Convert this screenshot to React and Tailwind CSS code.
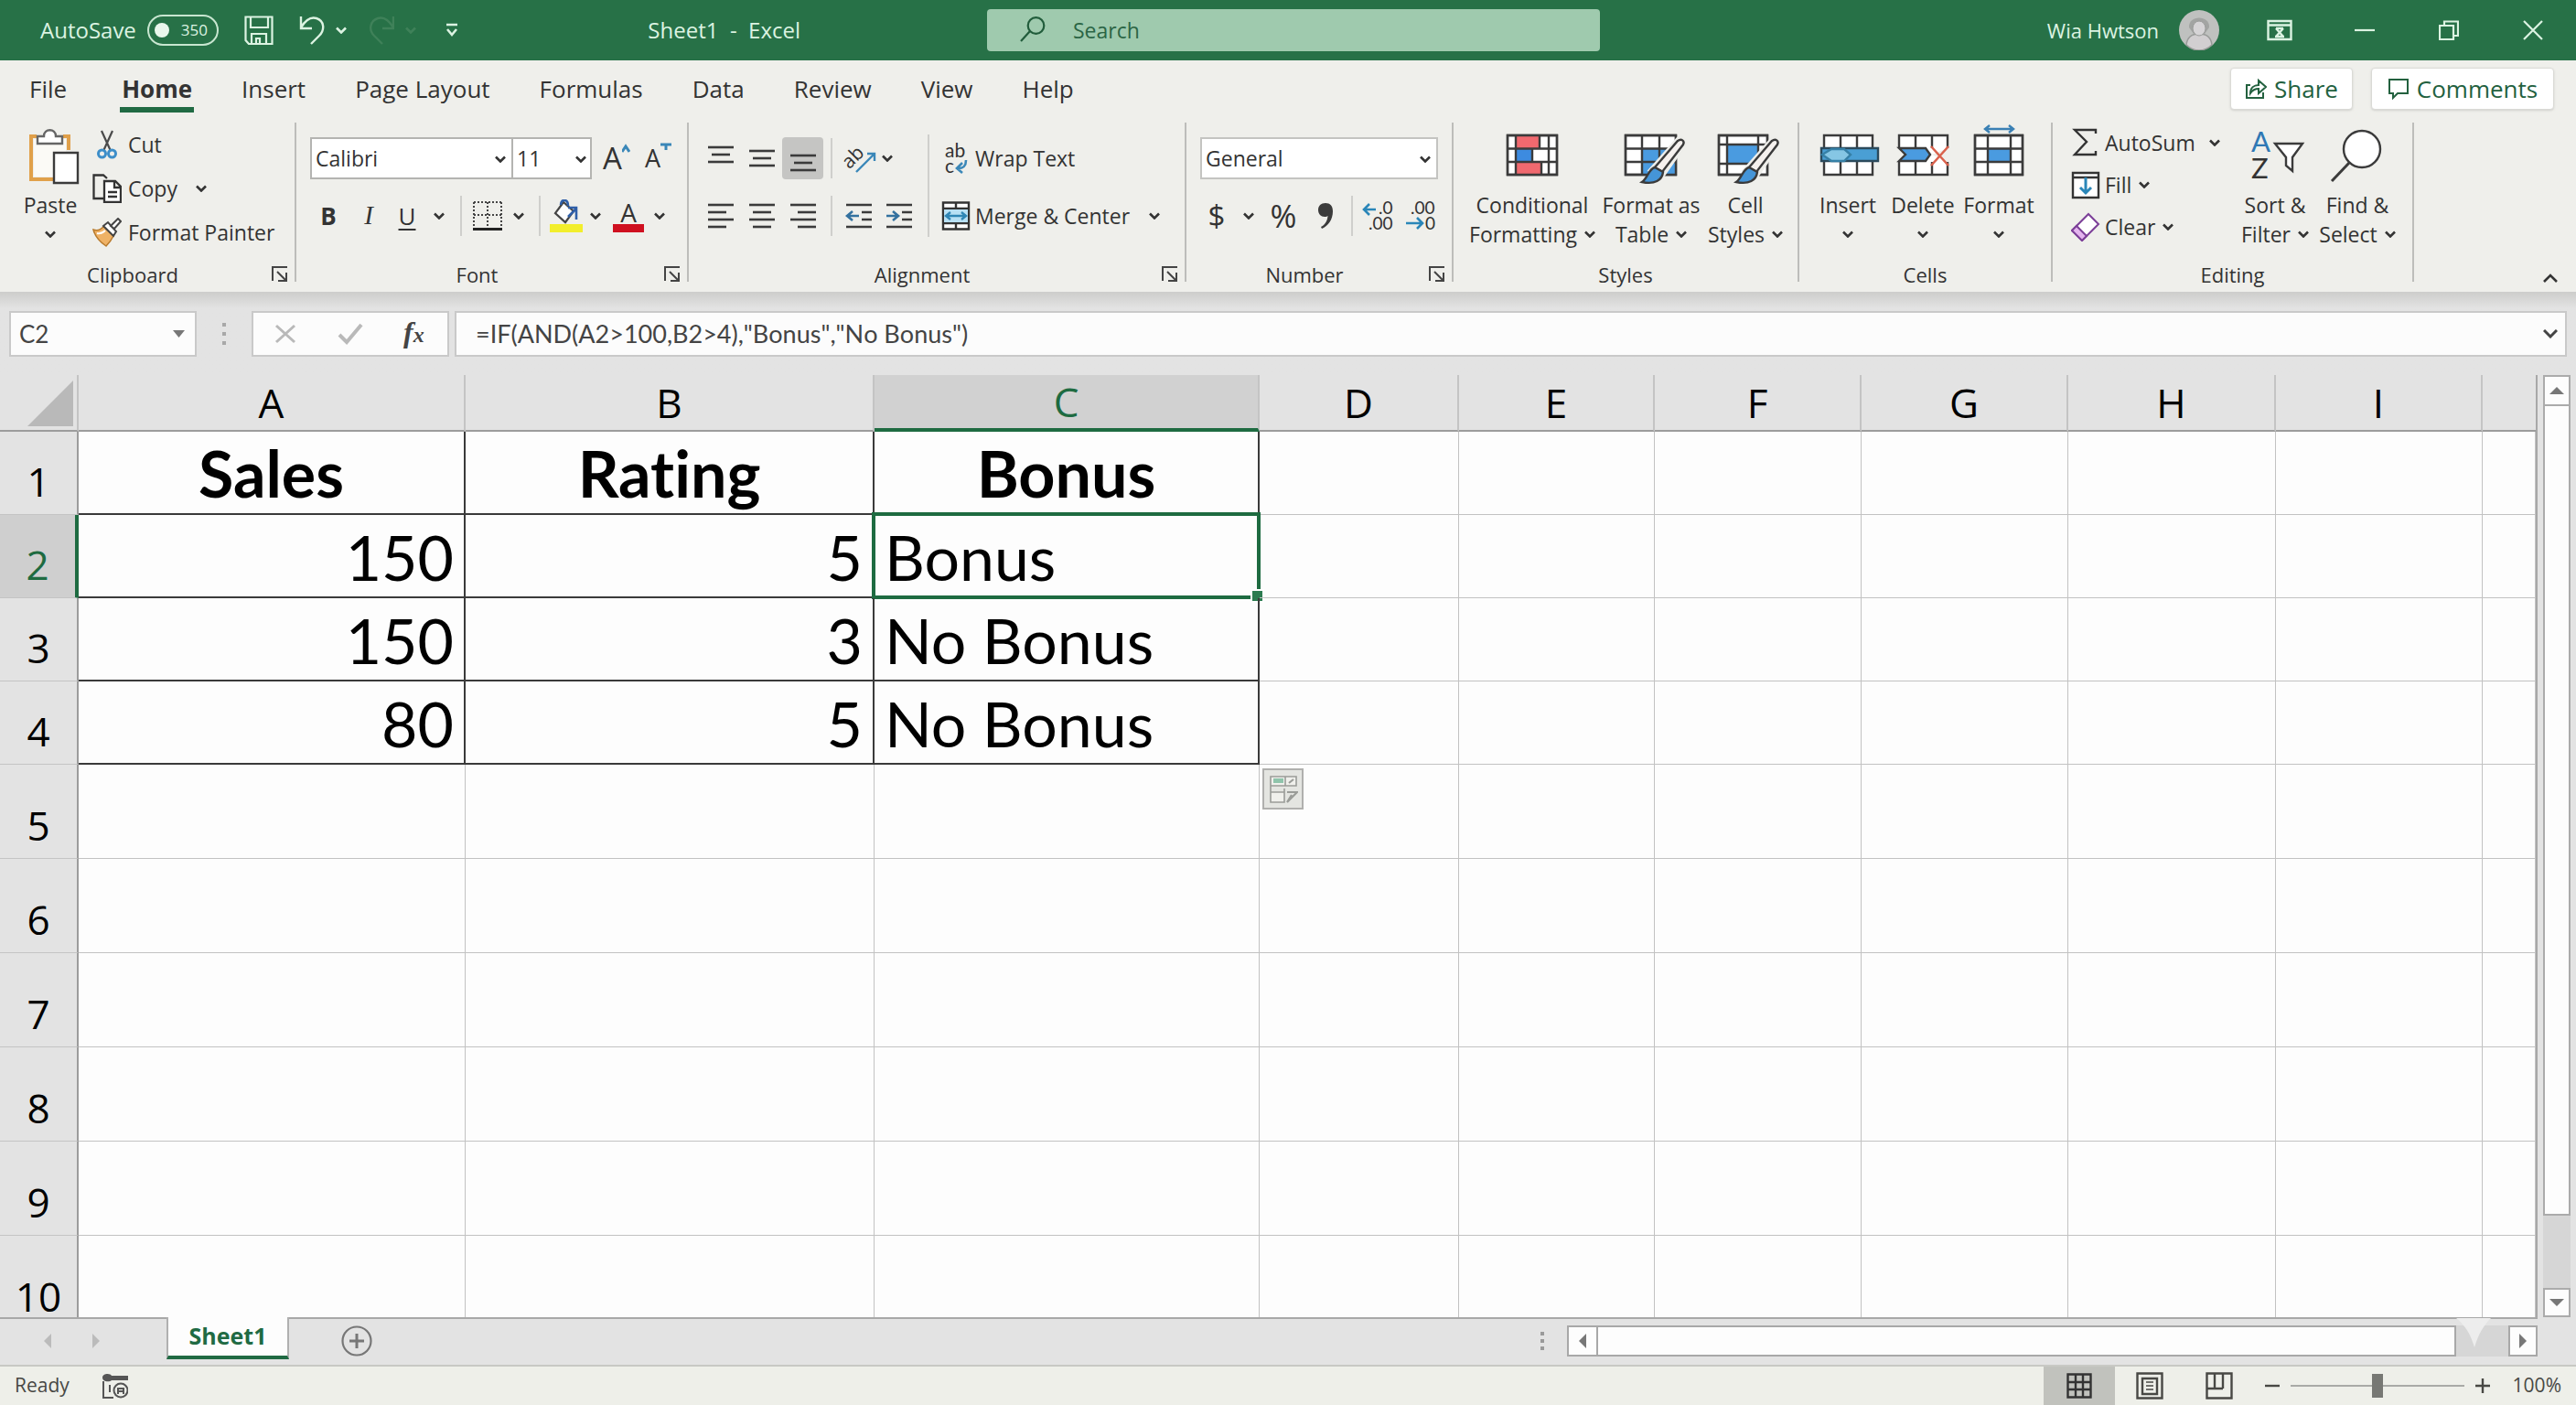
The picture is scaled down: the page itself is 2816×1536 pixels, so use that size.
import React from 'react'

const rowNumbers = [1, 2, 3, 4, 5, 6, 7, 8, 9, 10]

const columns = [
  { name: 'A', width: 'w-[423px]' },
  { name: 'B', width: 'w-[447px]' },
  { name: 'C', width: 'w-[421px]' },
  { name: 'D', width: 'w-[218px]' },
  { name: 'E', width: 'w-[214px]' },
  { name: 'F', width: 'w-[226px]' },
  { name: 'G', width: 'w-[226px]' },
  { name: 'H', width: 'w-[227px]' },
  { name: 'I', width: 'w-[226px]' },
  { name: '', width: '' },
]

const cells = {
  A1: 'Sales', B1: 'Rating', C1: 'Bonus',
  A2: '150', B2: '5', C2: 'Bonus',
  A3: '150', B3: '3', C3: 'No Bonus',
  A4: '80', B4: '5', C4: 'No Bonus',
}

const tabs = ['File', 'Home', 'Insert', 'Page Layout', 'Formulas', 'Data', 'Review', 'View', 'Help']

function Chevron({ className = '' }) {
  return (
    <svg className={`w-3 h-2 shrink-0 ${className}`} viewBox="0 0 12 8" fill="none" stroke="currentColor" strokeWidth="2.6">
      <path d="M1 1.5L6 6.5L11 1.5" />
    </svg>
  )
}

function ChevronButton({ label, className }) {
  return (
    <button aria-label={label} className={`flex items-center justify-center ${className}`}>
      <Chevron />
    </button>
  )
}

function Group({ label, launcher, className, children }) {
  return (
    <section className={`flex shrink-0 ${className}`}>
      <div className="flex-1 min-w-0 flex flex-col">
        <div className="h-[154px]">{children}</div>
        <div className="flex items-center h-6">
          <span className="flex-1 text-center text-[22px] leading-6">{label}</span>
          {launcher && (
            <button aria-label={`${label} settings`} className="w-8 flex justify-center">
              <svg className="w-[18px] h-[18px]" viewBox="0 0 18 18" fill="none" stroke="#444" strokeWidth="2">
                <path d="M1 16V1H17M6 6L15 15M16 7V16H7" />
              </svg>
            </button>
          )}
        </div>
      </div>
      <div className="w-[2px] h-[174px] bg-[#bdbdba]" />
    </section>
  )
}

function Separator({ className = '' }) {
  return <div className={`w-[2px] h-11 bg-[#cfcfcc] shrink-0 ${className}`} />
}

function BigButton({ icon, lines, className }) {
  return (
    <button className={`flex flex-col items-center pt-1 whitespace-nowrap ${className}`}>
      <svg className="w-16 h-[70px] overflow-visible" viewBox="0 0 64 70" fill="none" stroke="#3b3b3b" strokeWidth="2.4">
        {icon}
      </svg>
      <span className="h-8 leading-8">{lines[0]}</span>
      <span className="h-8 leading-8 flex items-center justify-center gap-2">
        {lines[1]}
        <Chevron />
      </span>
    </button>
  )
}

function Lines({ rows, className = '' }) {
  return (
    <svg className={`w-[30px] h-[30px] ${className}`} viewBox="0 0 30 30" stroke="#3b3b3b" strokeWidth="2.6">
      {rows.map(([x1, x2, y]) => (
        <line key={y} x1={x1} x2={x2} y1={y} y2={y} />
      ))}
    </svg>
  )
}

function TitleBar() {
  return (
    <header className="grid grid-cols-[1fr_670px_1067px] items-center h-[66px] bg-[#277147] text-[#dcf3e2] text-[24px]">
      <div className="flex items-center pl-11">
        <label htmlFor="autosave">AutoSave</label>
        <span className="relative ml-3 w-[78px] h-[34px]">
          <input id="autosave" type="checkbox" className="appearance-none block w-[78px] h-[34px] rounded-full border-2 border-[#c8e6d0]" />
          <span className="absolute left-2 top-[9px] w-4 h-4 rounded-full bg-[#e9f7ec] pointer-events-none" />
          <span className="absolute right-3 top-0 text-[17px] leading-[34px] pointer-events-none">350</span>
        </span>
        <button aria-label="Save" className="ml-7">
          <svg className="w-8 h-8" viewBox="0 0 32 32" fill="none" stroke="currentColor" strokeWidth="2.2">
            <path d="M2 1.5H30.500V31H5L1.500 27V1.500ZM7 2V13H26V2M8 31V20H24V31M13 31V25H17V31" />
          </svg>
        </button>
        <button aria-label="Undo" className="ml-7">
          <svg className="w-7 h-8" viewBox="0 0 28 32" fill="none" stroke="currentColor" strokeWidth="2.4">
            <path d="M2 1V14H14M2 13C7 5 13 1 19 3C28 6 28 16 22 22L13 31" />
          </svg>
        </button>
        <ChevronButton label="Undo history" className="ml-3" />
        <button aria-label="Redo" className="ml-6 text-[#3f8159]">
          <svg className="w-7 h-8" viewBox="0 0 28 32" fill="none" stroke="currentColor" strokeWidth="2.4">
            <path d="M27 1V14H15M27 13C22 5 16 1 10 3C1 6 0 16 6 22L15 31" />
          </svg>
        </button>
        <ChevronButton label="Redo history" className="ml-3 text-[#3f8159]" />
        <button aria-label="Customize toolbar" className="ml-8">
          <svg className="w-[14px] h-4" viewBox="0 0 14 16" fill="none" stroke="currentColor" strokeWidth="2.6">
            <path d="M1 2H13M2 7L7 13L12 7" />
          </svg>
        </button>
        <h1 className="ml-auto mr-[204px] whitespace-pre">Sheet1  -  Excel</h1>
      </div>
      <div className="relative">
        <svg className="absolute left-9 top-2 w-7 h-7" viewBox="0 0 28 28" fill="none" stroke="#215c3b" strokeWidth="2.2">
          <circle cx="17.500" cy="10" r="8.800" />
          <path d="M11 16L1 27" />
        </svg>
        <input
          aria-label="Search"
          placeholder="Search"
          className="w-full h-[46px] pl-[94px] rounded-sm bg-[#9fcaae] text-[23px] placeholder:text-[#2b6545] placeholder:opacity-100"
        />
      </div>
      <div className="flex items-center justify-end pr-9">
        <span className="text-[22px]">Wia Hwtson</span>
        <svg className="w-11 h-11 ml-[22px]" viewBox="0 0 44 44">
          <circle cx="22" cy="22" r="22" fill="#bfc1bf" />
          <path d="M8 38C9 29 15 26 22 26C29 26 35 29 36 38C28 46 16 46 8 38Z" fill="#d2cfd1" stroke="#999b99" strokeWidth="1.500" />
          <path d="M11 19C10 5 34 5 33 19L28 26H16Z" fill="#a2a4a2" />
          <ellipse cx="22" cy="20" rx="7" ry="8" fill="#d6d4d6" stroke="#999b99" />
        </svg>
        <button aria-label="Ribbon display options" className="ml-[52px]">
          <svg className="w-7 h-6" viewBox="0 0 28 24" fill="none" stroke="currentColor" strokeWidth="2.400">
            <path d="M1.500 2H26.500V22H1.500ZM1.500 6.500H26.500M10 10L18 19M18 10L10 19M9 19H19M10 10H18" />
          </svg>
        </button>
        <button aria-label="Minimize" className="ml-[68px]">
          <svg className="w-[22px] h-[22px]" viewBox="0 0 22 22" stroke="currentColor" strokeWidth="2.200">
            <path d="M0 11H22" />
          </svg>
        </button>
        <button aria-label="Restore" className="ml-[70px]">
          <svg className="w-[22px] h-[22px]" viewBox="0 0 22 22" fill="none" stroke="currentColor" strokeWidth="2.200">
            <path d="M1 6H16V21H1ZM6 6V1.500H21V17H16" />
          </svg>
        </button>
        <button aria-label="Close" className="ml-[70px]">
          <svg className="w-[22px] h-[22px]" viewBox="0 0 22 22" stroke="currentColor" strokeWidth="2.200">
            <path d="M1 1L21 21M21 1L1 21" />
          </svg>
        </button>
      </div>
    </header>
  )
}

function TabBar() {
  return (
    <div className="flex items-start h-[68px] pt-3 pl-8 pr-6 text-[26px]">
      <nav className="flex gap-[54px]">
        {tabs.map((tab) => (
          <a
            key={tab}
            href="#"
            className={
              tab === 'Home'
                ? 'relative font-bold ml-[6px] after:absolute after:-inset-x-[2px] after:-bottom-[6px] after:h-[6px] after:bg-[#206a43]'
                : ''
            }
          >
            {tab}
          </a>
        ))}
      </nav>
      <div className="ml-auto flex gap-5 -mt-1 text-[#23613f]">
        <button className="flex items-center justify-center gap-2 w-[134px] h-[46px] bg-white border border-[#dadad6] rounded-sm shadow-sm font-medium">
          <svg className="w-6 h-6" viewBox="0 0 24 24" fill="none" stroke="currentColor" strokeWidth="2">
            <path d="M6 8H2V22H20V16M6 17C6 11 10 8 15 8V3L23 10L15 17V12C11 12 8 14 6 17Z" />
          </svg>
          Share
        </button>
        <button className="flex items-center justify-center gap-2 w-[200px] h-[46px] bg-white border border-[#dadad6] rounded-sm shadow-sm font-medium">
          <svg className="w-6 h-6" viewBox="0 0 24 24" fill="none" stroke="currentColor" strokeWidth="2">
            <path d="M2 2H22V17H11L6 22V17H2Z" />
          </svg>
          Comments
        </button>
      </div>
    </div>
  )
}

function ClipboardGroup() {
  return (
    <Group label="Clipboard" launcher className="w-[324px]">
      <div className="flex pl-5">
        <BigButton
          className="w-[70px]"
          lines={['Paste', '']}
          icon={
            <>
              <path d="M17 11H11V58H36M46 11H52V26" stroke="#e0a04a" strokeWidth="4" />
              <path d="M14 14H49V55H14Z" fill="#fbfaf6" stroke="none" />
              <path d="M18 19V11H25C25 2 38 2 38 11H45V19Z" fill="#fff" stroke="#666" />
              <path d="M36 29H62V62H36Z" fill="#fff" />
            </>
          }
        />
        <div className="pl-[11px]">
          <button className="flex items-center h-12">
            <svg className="w-8 h-8 mr-[7px]" viewBox="0 0 32 32" fill="none">
              <path d="M10 1L20 23M22 1L12 23" stroke="#4a4a4a" strokeWidth="2.200" />
              <circle cx="10.500" cy="26" r="4" stroke="#3d8ec9" strokeWidth="3" />
              <circle cx="21.500" cy="26" r="4" stroke="#3d8ec9" strokeWidth="3" />
            </svg>
            Cut
          </button>
          <div className="flex items-center h-12">
            <button className="flex items-center">
              <svg className="w-8 h-8 mr-[7px]" viewBox="0 0 32 32" fill="none" stroke="#333" strokeWidth="2.300">
                <path d="M12 27H1.500V1.500H12L16 5" />
                <path d="M13 8H25L31 14V31H13ZM24 8V15H31M17 20H27M17 25H27" fill="#fff" />
              </svg>
              Copy
            </button>
            <ChevronButton label="Copy options" className="w-9 ml-2" />
          </div>
          <button className="flex items-center h-12 whitespace-nowrap">
            <svg className="w-8 h-8 mr-[7px]" viewBox="0 0 32 32" fill="none">
              <path d="M1 13C7 15 10 12 13 9L23 20C21 24 18 28 15 31C9 27 3 21 1 13Z" fill="#efb266" stroke="#b87a2c" strokeWidth="1.500" />
              <path d="M5 17C9 18 12 16 14 14" stroke="#fff" strokeWidth="2" />
              <path d="M12 9L17 5L26 15L23 20Z" fill="#fff" stroke="#444" strokeWidth="2" />
              <path d="M20 9L28 1L31 4L24 12Z" fill="#fff" stroke="#444" strokeWidth="2" />
            </svg>
            Format Painter
          </button>
        </div>
      </div>
    </Group>
  )
}

function FontGroup() {
  return (
    <Group label="Font" launcher className="w-[429px]">
      <div className="flex items-center pt-4 pl-[15px]">
        <div className="relative w-[222px]">
          <select aria-label="Font name" className="appearance-none w-full h-[46px] pl-1 bg-white border-2 border-[#b4b4b1]">
            <option>Calibri</option>
          </select>
          <Chevron className="absolute right-2 top-5 pointer-events-none" />
        </div>
        <div className="relative w-[88px] -ml-[2px]">
          <select aria-label="Font size" className="appearance-none w-full h-[46px] pl-1 bg-white border-2 border-[#b4b4b1]">
            <option>11</option>
          </select>
          <Chevron className="absolute right-[6px] top-5 pointer-events-none" />
        </div>
        <button aria-label="Increase font size" className="ml-3 flex">
          <span className="text-[33px] leading-10">A</span>
          <svg className="w-[9px] h-3 mt-1" viewBox="0 0 9 12" fill="none" stroke="#3a87b8" strokeWidth="3">
            <path d="M0 9L4 3L8 9" />
          </svg>
        </button>
        <button aria-label="Decrease font size" className="ml-4 flex">
          <span className="text-[27px] leading-10">A</span>
          <svg className="w-3 h-3 mt-[2px]" viewBox="0 0 12 12" fill="none" stroke="#3a87b8" strokeWidth="3">
            <path d="M0 3H12M6 3V9" />
          </svg>
        </button>
      </div>
      <div className="flex items-center h-11 mt-[18px] pl-[13px]">
        <button className="w-11 text-[26px] font-bold">B</button>
        <button className="w-11 font-['Liberation_Serif'] italic text-[29px]">I</button>
        <button className="w-10 text-[26px] underline underline-offset-4">U</button>
        <ChevronButton label="Underline options" className="w-[30px]" />
        <Separator className="ml-2" />
        <button aria-label="Borders" className="ml-3">
          <svg className="w-8 h-8" viewBox="0 0 32 32" fill="none" stroke="#444" strokeWidth="2">
            <path d="M1 1H31M1 1V29M31 1V29M16 1V29M1 15H31" strokeDasharray="2 2" />
            <path d="M0 30.500H32" stroke="#222" strokeWidth="3" />
          </svg>
        </button>
        <ChevronButton label="Border options" className="w-9" />
        <Separator className="ml-1" />
        <button aria-label="Fill color" className="ml-[10px]">
          <svg className="w-9 h-9" viewBox="0 0 36 36" fill="none">
            <path d="M15 3L26 13L17 25L6 15Z" fill="#fff" stroke="#444" strokeWidth="2.200" />
            <path d="M12 6C12 -1 20 -1 20 7M20 9H29V22M29 10L20 19" stroke="#2f5fa8" strokeWidth="2.600" />
            <path d="M0 27H36V36H0Z" fill="#f2ee2c" />
          </svg>
        </button>
        <ChevronButton label="Fill color options" className="w-7" />
        <button aria-label="Font color" className="flex flex-col items-center w-9 ml-1">
          <span className="text-[28px] leading-[26px]">A</span>
          <span className="w-[34px] h-[9px] bg-[#cf1020]" />
        </button>
        <ChevronButton label="Font color options" className="w-8" />
      </div>
    </Group>
  )
}

function AlignmentGroup() {
  return (
    <Group label="Alignment" launcher className="w-[544px]">
      <div className="flex">
        <div className="pl-3">
          <div className="flex items-center h-[46px] mt-4">
            <button aria-label="Top align" className="w-[45px] flex justify-center">
              <Lines rows={[[1, 29, 3], [5, 25, 11], [1, 29, 19]]} />
            </button>
            <button aria-label="Middle align" className="w-[45px] flex justify-center">
              <Lines rows={[[1, 29, 7], [5, 25, 15], [1, 29, 23]]} />
            </button>
            <button aria-label="Bottom align" className="w-[45px] h-[46px] flex items-center justify-center bg-[#c5c5c3] rounded-sm">
              <Lines rows={[[1, 29, 12], [5, 25, 20], [1, 29, 28]]} />
            </button>
            <Separator className="ml-2" />
            <button aria-label="Orientation" className="ml-[14px]">
              <svg className="w-9 h-8 overflow-visible" viewBox="0 0 36 32" fill="none">
                <text x="-4" y="22" transform="rotate(-45 8 15)" fontSize="21" fill="#333" className="font-['Open_Sans']">ab</text>
                <path d="M12 31L32 11M24 11H32V19" stroke="#3a87b8" strokeWidth="2.400" />
              </svg>
            </button>
            <ChevronButton label="Orientation options" className="w-5" />
          </div>
          <div className="flex items-center h-11 mt-[18px]">
            <button aria-label="Align left" className="w-[45px] flex justify-center">
              <Lines rows={[[1, 29, 3], [1, 21, 11], [1, 29, 19], [1, 21, 27]]} />
            </button>
            <button aria-label="Center" className="w-[45px] flex justify-center">
              <Lines rows={[[1, 29, 3], [5, 25, 11], [1, 29, 19], [5, 25, 27]]} />
            </button>
            <button aria-label="Align right" className="w-[45px] flex justify-center">
              <Lines rows={[[1, 29, 3], [9, 29, 11], [1, 29, 19], [9, 29, 27]]} />
            </button>
            <Separator className="ml-2" />
            <button aria-label="Decrease indent" className="ml-[14px]">
              <svg className="w-[30px] h-[30px]" viewBox="0 0 30 30" fill="none" stroke="#3b3b3b" strokeWidth="2.600">
                <path d="M1 3H29M18 11H29M18 19H29M1 27H29" />
                <path d="M2 15H15M8 10L2 15L8 20" stroke="#33719f" />
              </svg>
            </button>
            <button aria-label="Increase indent" className="ml-[14px]">
              <svg className="w-[30px] h-[30px]" viewBox="0 0 30 30" fill="none" stroke="#3b3b3b" strokeWidth="2.600">
                <path d="M1 3H29M18 11H29M18 19H29M1 27H29" />
                <path d="M1 15H14M8 10L14 15L8 20" stroke="#33719f" />
              </svg>
            </button>
          </div>
        </div>
        <div className="w-[2px] h-[112px] mt-[13px] ml-4 bg-[#cfcfcc]" />
        <div className="pl-[13px]">
          <button className="flex items-center h-[46px] mt-4 whitespace-nowrap">
            <svg className="w-8 h-9 mr-[5px] overflow-visible" viewBox="0 0 32 36" fill="none">
              <text x="4" y="17" fontSize="21" fill="#333" className="font-['Lato']">ab</text>
              <text x="4" y="34" fontSize="21" fill="#333" className="font-['Lato']">c</text>
              <path d="M27 20C27 27 24 29 18 29M23 23L17 29L23 34" stroke="#3a87b8" strokeWidth="2.600" />
            </svg>
            Wrap Text
          </button>
          <div className="flex items-center h-11 mt-[18px]">
            <button className="flex items-center whitespace-nowrap">
              <svg className="w-8 h-8 mr-[5px]" viewBox="0 0 32 32" fill="none" stroke="#333" strokeWidth="2.400">
                <path d="M2 1.500H30V30.500H2ZM2 8H30M2 24H30M16 1.500V8M16 24V30.500" fill="#fff" />
                <path d="M3 9H29V23H3Z" fill="#b8e0f4" stroke="none" />
                <path d="M5 16H27M10 12L5 16L10 20M22 12L27 16L22 20" stroke="#2f86b5" />
              </svg>
              Merge &amp; Center
            </button>
            <ChevronButton label="Merge options" className="w-[54px]" />
          </div>
        </div>
      </div>
    </Group>
  )
}

function NumberGroup() {
  return (
    <Group label="Number" launcher className="w-[292px]">
      <div className="relative w-[260px] mt-4 ml-[15px]">
        <select aria-label="Number format" className="appearance-none w-full h-[46px] pl-1 bg-white border-2 border-[#c4c4c1]">
          <option>General</option>
        </select>
        <Chevron className="absolute right-2 top-5 pointer-events-none" />
      </div>
      <div className="flex items-center h-11 mt-[18px] pl-[18px]">
        <button className="w-[30px] text-[33px]">$</button>
        <ChevronButton label="Currency options" className="w-10" />
        <button className="w-9 text-[35px]">%</button>
        <button aria-label="Comma style" className="ml-3 w-8 flex justify-center">
          <svg className="w-4 h-7" viewBox="0 0 16 28" fill="#3b3b3b">
            <path d="M8 0C3 0 0 3 0 7.500C0 12 3 15 7 15C9 15 10 14.500 10.500 14C10 20 7 24 3 26L4 28C11 25 16 18 16 9C16 3 13 0 8 0Z" />
          </svg>
        </button>
        <Separator className="ml-3" />
        <button aria-label="Increase decimal" className="ml-3">
          <svg className="w-[34px] h-8 overflow-visible" viewBox="0 0 34 32" fill="#333">
            <text x="16" y="14" fontSize="19" className="font-['Lato']">.0</text>
            <text x="5" y="31" fontSize="19" className="font-['Lato']">.00</text>
            <path d="M0 9H13M6 3L0 9L6 15" fill="none" stroke="#2a86b8" strokeWidth="2.600" />
          </svg>
        </button>
        <button aria-label="Decrease decimal" className="ml-3">
          <svg className="w-[34px] h-8 overflow-visible" viewBox="0 0 34 32" fill="#333">
            <text x="5" y="14" fontSize="19" className="font-['Lato']">.00</text>
            <text x="21" y="31" fontSize="19" className="font-['Lato']">0</text>
            <path d="M0 24H18M12 18L18 24L12 30" fill="none" stroke="#2a86b8" strokeWidth="2.600" />
          </svg>
        </button>
      </div>
    </Group>
  )
}

function Brush() {
  return (
    <>
      <path d="M62 15C66 13 69 16 67 20L43 54L33 48Z" fill="#f5f1ee" stroke="#eeeeea" strokeWidth="7" />
      <path d="M61 16C65 13 69 16 67 20L44 50L36 45Z" fill="#f5f1ee" />
      <path d="M36 45L45 50C44 59 36 64 22 61C28 57 29 47 36 45Z" fill="#4595d8" />
    </>
  )
}

function StylesGroup() {
  return (
    <Group label="Styles" className="w-[378px]">
      <div className="flex pl-[22px]">
        <BigButton
          className="w-32"
          lines={['Conditional', 'Formatting']}
          icon={
            <>
              <path d="M5 10H59V53H5Z" fill="#fff" />
              <path d="M15 10H39V24H15ZM15 39H41V53H15Z" fill="#f0696f" stroke="none" />
              <path d="M15 24H32V39H15Z" fill="#3d8be0" stroke="none" />
              <path d="M5 24.500H59M5 39H59M14 10V53M50 10V53M40 10V24M32 24V39M42 39V53" />
              <path d="M5 10H59V53H5Z" />
            </>
          }
        />
        <BigButton
          className="w-[132px]"
          lines={['Format as', 'Table']}
          icon={
            <>
              <path d="M4 10H59V53H4Z" fill="#fff" />
              <path d="M23 24H59V53H23Z" fill="#4a9be0" stroke="none" />
              <path d="M4 24.500H59M4 39H59M22 10V53M41 10V53" />
              <path d="M4 10H59V53H4Z" />
              <Brush />
            </>
          }
        />
        <BigButton
          className="w-[74px]"
          lines={['Cell', 'Styles']}
          icon={
            <>
              <path d="M3 10H56V53H3Z" fill="#fff" />
              <path d="M12 20H46V41H12Z" fill="#4a9be0" stroke="none" />
              <path d="M3 20H56M3 41H56M12 10V53M46 10V53" />
              <path d="M3 10H56V53H3Z" />
              <Brush />
            </>
          }
        />
      </div>
    </Group>
  )
}

function CellsGroup() {
  return (
    <Group label="Cells" className="w-[277px]">
      <div className="flex pl-[12px]">
        <BigButton
          className="w-[82px]"
          lines={['Insert', '']}
          icon={
            <>
              <path d="M6 10H59V53H6ZM24 10V53M42 10V53" fill="#fff" />
              <path d="M3 24H65V38H3Z" fill="#4a9fd4" stroke="#2b4a5c" />
              <path d="M4 31L14 25H28L35 31L28 38H14Z" fill="#86c6e4" stroke="#3680a6" />
            </>
          }
        />
        <BigButton
          className="w-[82px]"
          lines={['Delete', '']}
          icon={
            <>
              <path d="M6 10H59V24L42 31L59 39V53H6V39L13 31L6 24Z" fill="#fff" stroke="none" />
              <path d="M59 24V10H6V24M6 39V53H59V39M24 10V53M42 10V24M42 39V53" />
              <path d="M6 24H35L40 31L35 38H6L13 31Z" fill="#4a9be0" />
              <path d="M41 22L60 43M60 22L41 43" stroke="#d9614c" strokeWidth="2.600" />
            </>
          }
        />
        <BigButton
          className="w-[84px]"
          lines={['Format', '']}
          icon={
            <>
              <path d="M6 10H58V53H6Z" fill="#fff" />
              <path d="M20 24H45V39H20Z" fill="#4a9be0" stroke="none" />
              <path d="M6 24.500H58M6 39H58M20 10V53M45 10V53" />
              <path d="M6 10H58V53H6Z" />
              <path d="M17 3H48M22 -1L17 3L22 7M43 -1L48 3L43 7" stroke="#3a80b4" />
            </>
          }
        />
      </div>
    </Group>
  )
}

function EditingGroup() {
  return (
    <Group label="Editing" className="w-[395px]">
      <div className="flex pl-5">
        <div className="w-[178px]">
          <div className="flex items-center h-11">
            <button className="flex items-center">
              <svg className="w-8 h-8 mr-[5px]" viewBox="0 0 32 32" fill="none" stroke="#333" strokeWidth="2.400">
                <path d="M27 6V2H4L17 15L4 29H27V25" />
              </svg>
              AutoSum
            </button>
            <ChevronButton label="AutoSum options" className="w-[54px]" />
          </div>
          <button className="flex items-center h-12">
            <svg className="w-8 h-8 mr-[5px]" viewBox="0 0 32 32" fill="none" stroke="#333" strokeWidth="2.400">
              <path d="M2 3H30V30H2ZM2 8H30" fill="#fff" />
              <path d="M16 8V25M10 19L16 25L22 19" stroke="#2a86b8" strokeWidth="3" />
            </svg>
            Fill
            <Chevron className="ml-2" />
          </button>
          <button className="flex items-center h-11">
            <svg className="w-8 h-8 mr-[5px]" viewBox="0 0 32 32" fill="none" stroke="#7c3f98" strokeWidth="2">
              <path d="M19 2L30 13L12 31L1 20Z" fill="#fff" />
              <path d="M6 15L1 20L12 31L17 26Z" fill="#e3b4ee" />
            </svg>
            Clear
            <Chevron className="ml-2" />
          </button>
        </div>
        <BigButton
          className="w-[90px]"
          lines={['Sort &', 'Filter']}
          icon={
            <>
              <text x="6" y="28" fontSize="31" fill="#2f78b5" stroke="none" className="font-['Lato']">A</text>
              <text x="6" y="57" fontSize="31" fill="#333" stroke="none" className="font-['Lato']">Z</text>
              <path d="M32 19H62L51 34V49L44 43V34Z" fill="#fff" />
            </>
          }
        />
        <BigButton
          className="w-[90px]"
          lines={['Find &', 'Select']}
          icon={
            <>
              <circle cx="37" cy="25" r="20" fill="#fff" />
              <path d="M23 40L4 60" strokeWidth="3" />
            </>
          }
        />
      </div>
    </Group>
  )
}

function FormulaBar() {
  return (
    <div className="flex items-center h-[91px] px-[10px] text-[27px] text-[#444] font-['Lato'] [font-kerning:none] bg-linear-to-b from-[#cdcdcb] to-[#e3e3e3] to-20%">
      <div className="relative w-[205px]">
        <input aria-label="Name box" defaultValue="C2" className="w-full h-[50px] pl-[9px] bg-[#fcfcfc] border-2 border-[#c9c9c9] text-[26px]" />
        <svg className="absolute right-[13px] top-[21px] w-[13px] h-2 pointer-events-none" viewBox="0 0 13 8" fill="#777">
          <path d="M0 0H13L6.500 8Z" />
        </svg>
      </div>
      <svg className="w-1 h-6 mx-7" viewBox="0 0 4 24" fill="#a8a8a8">
        <path d="M0 0H4V4H0ZM0 10H4V14H0ZM0 20H4V24H0Z" />
      </svg>
      <div className="flex items-center w-[216px] h-[50px] bg-[#fcfcfc] border-2 border-[#c9c9c9]">
        <button aria-label="Cancel" className="ml-[23px]">
          <svg className="w-6 h-6" viewBox="0 0 24 24" stroke="#b9b9b9" strokeWidth="3">
            <path d="M2 3L22 21M22 3L2 21" />
          </svg>
        </button>
        <button aria-label="Enter" className="ml-[45px]">
          <svg className="w-7 h-6" viewBox="0 0 28 24" fill="none" stroke="#b9b9b9" strokeWidth="4">
            <path d="M2 13L10 21L26 2" />
          </svg>
        </button>
        <button aria-label="Insert function" className="ml-11 font-['Liberation_Serif'] italic font-bold text-[32px] leading-8">
          f<span className="text-[24px]">x</span>
        </button>
      </div>
      <div className="relative flex-1 ml-[6px]">
        <input
          aria-label="Formula bar"
          defaultValue={'=IF(AND(A2>100,B2>4),"Bonus","No Bonus")'}
          className="w-full h-[50px] pl-[21px] bg-[#fcfcfc] border-2 border-[#c9c9c9]"
        />
        <button aria-label="Expand formula bar" className="absolute right-[10px] top-5">
          <svg className="w-4 h-[10px]" viewBox="0 0 16 10" fill="none" stroke="#444" strokeWidth="3">
            <path d="M1 1L8 8L15 1" />
          </svg>
        </button>
      </div>
    </div>
  )
}

function Cell({ column, row }) {
  const value = cells[column + row]
  const base = 'relative p-0 align-bottom whitespace-nowrap'
  if (!value) {
    return <td className={`${base} border-r border-b border-[#c2c2c2]`}></td>
  }
  let text = 'text-right text-[68px]'
  if (row === 1) text = 'text-center text-[70px] font-bold'
  else if (column === 'C') text = 'text-left text-[68px]'
  return (
    <td className={`${base} border-r-2 border-b-2 border-[#3a3a3a] px-[11px] pb-[10px] leading-[67px] ${text}`}>
      {value}
      {column + row === 'C2' && (
        <>
          <span className="absolute -left-[3px] -right-[3px] -top-[3px] -bottom-[3px] border-4 border-[#1e6b41] pointer-events-none" />
          <span className="absolute -right-[7px] -bottom-[7px] w-[15px] h-[15px] bg-[#2c7b50] border-2 border-white" />
        </>
      )}
      {column + row === 'C4' && (
        <button aria-label="Auto fill options" className="absolute z-10 left-[424px] top-[95px] w-[45px] h-[45px] bg-[#e4e5e1] border-2 border-[#b0b0ae] flex items-center justify-center">
          <svg className="w-8 h-8" viewBox="0 0 32 32" fill="none" stroke="#9a9c98" strokeWidth="1.600">
            <path d="M2 2H30V12H2ZM18 2V12M2 12V30H17V19H2M17 15V19" fill="#f0f0ec" />
            <path d="M5 4H16V9H5Z" fill="#8fc4ab" stroke="none" />
            <path d="M20 19H31L20 30L25 22M22 9L27 5" strokeWidth="2.200" />
          </svg>
        </button>
      )}
    </td>
  )
}

function Sheet() {
  return (
    <div className="flex-1 min-h-0 flex bg-[#e3e3e3]">
      <div className="flex-1 min-w-0 overflow-hidden bg-[#e3e3e3]">
        <table className="table-fixed w-full border-separate border-spacing-0 font-['Lato'] [font-variant-ligatures:none] text-black bg-[#fdfdfd] border-r-2 border-[#a8a8a8]">
          <colgroup>
            <col className="w-[86px]" />
            {columns.map((col) => (
              <col key={col.name} className={col.width} />
            ))}
          </colgroup>
          <thead>
            <tr className="h-[62px] bg-[#e3e3e3] font-['Open_Sans'] text-[44px] leading-[44px]">
              <td className="p-0 align-bottom border-r-2 border-b-2 border-r-[#c4c4c4] border-b-[#9c9c9c]">
                <svg className="w-[50px] h-[50px] ml-auto mr-1 mb-1" viewBox="0 0 50 50" fill="#b9b9b9">
                  <path d="M50 0V50H0Z" />
                </svg>
              </td>
              {columns.map((col) => (
                <th
                  key={col.name}
                  scope="col"
                  className={
                    col.name === 'C'
                      ? 'p-0 font-normal text-[#1e6b41] bg-[#d1d1d1] border-r-2 border-r-[#c4c4c4] border-b-4 border-b-[#1e6b41]'
                      : col.name
                        ? 'p-0 font-normal border-r-2 border-b-2 border-r-[#c4c4c4] border-b-[#9c9c9c]'
                        : 'p-0 border-b-2 border-b-[#9c9c9c]'
                  }
                >
                  {col.name}
                </th>
              ))}
            </tr>
          </thead>
          <tbody>
            {rowNumbers.map((row) => (
              <tr key={row} className={row < 5 ? 'h-[91px]' : 'h-[103px]'}>
                <th
                  scope="row"
                  className={`p-0 pb-[14px] align-bottom font-normal font-['Open_Sans'] text-[44px] leading-[44px] border-b border-b-[#c4c4c4] ${
                    row === 2
                      ? 'bg-[#cfcfcf] text-[#1e6b41] border-r-4 border-r-[#1e6b41]'
                      : 'bg-[#e3e3e3] border-r-2 border-r-[#9c9c9c]'
                  }`}
                >
                  {row}
                </th>
                {columns.map((col) => (
                  <Cell key={col.name} column={col.name} row={row} />
                ))}
              </tr>
            ))}
          </tbody>
        </table>
      </div>
      <div className="flex flex-col w-9 ml-[6px] pr-[6px]">
        <button aria-label="Scroll up" className="flex items-center justify-center h-[34px] bg-[#fdfdfd] border-2 border-[#ababab]">
          <svg className="w-4 h-2" viewBox="0 0 16 8" fill="#777">
            <path d="M8 0L16 8H0Z" />
          </svg>
        </button>
        <div className="flex-1 flex flex-col bg-[#d6d6d6]">
          <div className="h-[92%] -mt-[2px] bg-[#fdfdfd] border-2 border-[#ababab]" />
        </div>
        <button aria-label="Scroll down" className="flex items-center justify-center h-8 bg-[#fdfdfd] border-2 border-[#ababab]">
          <svg className="w-4 h-2" viewBox="0 0 16 8" fill="#777">
            <path d="M0 0H16L8 8Z" />
          </svg>
        </button>
      </div>
    </div>
  )
}

function SheetTabs() {
  return (
    <div className="flex items-start h-[52px] pr-[42px] bg-[#e3e3e3]">
      <div className="flex items-center h-[50px] w-[182px] pl-12 gap-[45px] border-t-2 border-[#a8a8a8]">
        <button aria-label="Previous sheet">
          <svg className="w-2 h-4" viewBox="0 0 8 16" fill="#bbb">
            <path d="M8 0V16L0 8Z" />
          </svg>
        </button>
        <button aria-label="Next sheet">
          <svg className="w-2 h-4" viewBox="0 0 8 16" fill="#bbb">
            <path d="M0 0V16L8 8Z" />
          </svg>
        </button>
      </div>
      <button className="w-[134px] h-[46px] bg-[#fdfdfd] border-x-2 border-x-[#b0b0b0] border-b-4 border-b-[#206a43] text-[#206a43] text-[25px] font-bold">
        Sheet1
      </button>
      <div className="flex-1 flex items-center h-[50px] pl-[57px] border-t-2 border-[#a8a8a8]">
        <button aria-label="New sheet">
          <svg className="w-[34px] h-[34px]" viewBox="0 0 34 34" fill="none" stroke="#777" strokeWidth="2.200">
            <circle cx="17" cy="17" r="15.500" />
            <path d="M9 17H25M17 9V25" strokeWidth="3" />
          </svg>
        </button>
        <svg className="w-1 h-5 ml-auto mr-[25px]" viewBox="0 0 4 20" fill="#9a9a9a">
          <path d="M0 0H4V4H0ZM0 8H4V12H0ZM0 16H4V20H0Z" />
        </svg>
        <div className="flex w-[1061px] h-[34px] bg-[#d6d6d6]">
          <button aria-label="Scroll left" className="flex items-center justify-center w-[34px] bg-[#fdfdfd] border-2 border-[#a8a8a8]">
            <svg className="w-2 h-4" viewBox="0 0 8 16" fill="#777">
              <path d="M8 0V16L0 8Z" />
            </svg>
          </button>
          <div className="w-[940px] -ml-[2px] bg-[#fdfdfd] border-2 border-[#a8a8a8]" />
          <svg className="w-10 h-8 -mt-2" viewBox="0 0 40 32" fill="#ededed">
            <path d="M0 0H38C30 8 24 18 20 32C16 18 10 8 0 0Z" />
          </svg>
          <button aria-label="Scroll right" className="ml-auto flex items-center justify-center w-8 bg-[#fdfdfd] border-2 border-[#a8a8a8]">
            <svg className="w-2 h-4" viewBox="0 0 8 16" fill="#777">
              <path d="M0 0V16L8 8Z" />
            </svg>
          </button>
        </div>
      </div>
    </div>
  )
}

function StatusBar() {
  return (
    <footer className="flex items-center h-11 pl-4 pr-4 bg-[#eeefe9] border-t-2 border-[#c8c9c4] text-[21px] text-[#484844]">
      <span>Ready</span>
      <button aria-label="Record macro" className="ml-9">
        <svg className="w-7 h-7" viewBox="0 0 28 28" fill="none" stroke="#555" strokeWidth="2">
          <path d="M1 9V27H12M8 13V21" />
          <path d="M0 5C0 0 9 0 10 3H28V8H10C8 10 0 10 0 5Z" fill="#555" stroke="none" />
          <circle cx="20" cy="19" r="7.500" />
          <path d="M17 23V17H23V23M17 20H23" />
        </svg>
      </button>
      <div className="ml-auto flex items-center h-full">
        <button aria-label="Normal view" className="flex items-center justify-center w-[78px] h-full bg-[#c1c2bd]">
          <svg className="w-7 h-7" viewBox="0 0 28 28" fill="none" stroke="#333" strokeWidth="2.400">
            <path d="M1.500 1.500H26.500V26.500H1.500ZM1.500 10H26.500M1.500 18H26.500M10 1.500V26.500M18 1.500V26.500" />
          </svg>
        </button>
        <button aria-label="Page layout view" className="flex items-center justify-center w-[76px]">
          <svg className="w-[30px] h-[30px]" viewBox="0 0 30 30" fill="none" stroke="#484844" strokeWidth="2.400">
            <path d="M1.500 1.500H28.500V28.500H1.500ZM7 7H23V24H7Z" />
            <path d="M11 11H19M11 15H19M11 19H19" strokeWidth="1.600" />
          </svg>
        </button>
        <button aria-label="Page break preview" className="flex items-center justify-center w-[76px]">
          <svg className="w-[30px] h-[30px]" viewBox="0 0 30 30" fill="none" stroke="#484844" strokeWidth="2.400">
            <path d="M1.500 1.500H28.500V28.500H1.500ZM10 1.500V18M19 1.500V18M1.500 18H19" />
          </svg>
        </button>
        <button aria-label="Zoom out" className="ml-3">
          <svg className="w-4 h-4" viewBox="0 0 16 16" stroke="#484844" strokeWidth="2.400">
            <path d="M0 8H16" />
          </svg>
        </button>
        <input
          aria-label="Zoom"
          type="range"
          min="0"
          max="200"
          defaultValue="101"
          className="appearance-none w-[190px] h-[26px] mx-3 bg-transparent bg-linear-to-b from-[#a9aaa6] to-[#a9aaa6] bg-[length:100%_2px] bg-center bg-no-repeat [&::-webkit-slider-thumb]:appearance-none [&::-webkit-slider-thumb]:w-3 [&::-webkit-slider-thumb]:h-[26px] [&::-webkit-slider-thumb]:bg-[#777874]"
        />
        <button aria-label="Zoom in">
          <svg className="w-4 h-4" viewBox="0 0 16 16" stroke="#484844" strokeWidth="2.400">
            <path d="M0 8H16M8 0V16" />
          </svg>
        </button>
        <span className="ml-[25px]">100%</span>
      </div>
    </footer>
  )
}

function App() {
  return (
    <div className="flex flex-col h-screen overflow-hidden font-['Open_Sans',sans-serif] text-[#333] bg-[#e3e3e3]">
      <TitleBar />
      <div className="bg-[#efefeb]">
        <TabBar />
        <div className="flex h-[185px] text-[23px]">
          <ClipboardGroup />
          <FontGroup />
          <AlignmentGroup />
          <NumberGroup />
          <StylesGroup />
          <CellsGroup />
          <EditingGroup />
          <button aria-label="Collapse ribbon" className="ml-auto self-end mr-5 mb-[10px]">
            <svg className="w-4 h-[10px]" viewBox="0 0 16 10" fill="none" stroke="#333" strokeWidth="2.600">
              <path d="M1 9L8 2L15 9" />
            </svg>
          </button>
        </div>
      </div>
      <FormulaBar />
      <Sheet />
      <SheetTabs />
      <StatusBar />
    </div>
  )
}

export default App
